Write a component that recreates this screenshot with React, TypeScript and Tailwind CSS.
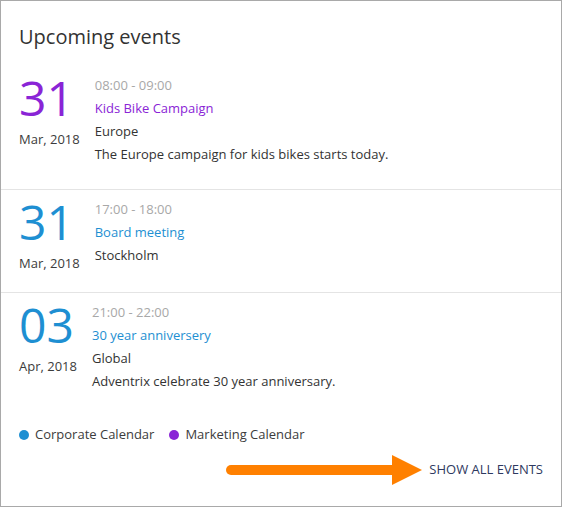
import { FC } from "react";

type EventItem = {
  day: string;
  month: string;
  time: string;
  title: string;
  location: string;
  description?: string;
  calendar: "corporate" | "marketing";
};

const events: EventItem[] = [
  {
    day: "31",
    month: "Mar, 2018",
    time: "08:00 - 09:00",
    title: "Kids Bike Campaign",
    location: "Europe",
    description: "The Europe campaign for kids bikes starts today.",
    calendar: "marketing",
  },
  {
    day: "31",
    month: "Mar, 2018",
    time: "17:00 - 18:00",
    title: "Board meeting",
    location: "Stockholm",
    calendar: "corporate",
  },
  {
    day: "03",
    month: "Apr, 2018",
    time: "21:00 - 22:00",
    title: "30 year anniversery",
    location: "Global",
    description: "Adventrix celebrate 30 year anniversary.",
    calendar: "corporate",
  },
];

const EventRow: FC<{ event: EventItem; last: boolean }> = ({ event, last }) => {
  const color = event.calendar === "marketing" ? "text-[#8a24d6]" : "text-[#1e8fd2]";
  return (
    <div className={`flex items-start gap-[15px] px-[18px] pt-[8px] ${last ? "" : "border-b border-[#e4e4e4]"}`}>
      <div className="flex flex-col pb-[17px]">
        <span className={`text-[48px] leading-none ${color}`}>{event.day}</span>
        <span className="mt-[6px] text-[13px] leading-[23px] text-[#3c3c3c]">{event.month}</span>
      </div>
      <div className="flex flex-col pb-[23px] text-[13px] leading-[23px]">
        <span className="text-[#a8a8a8]">{event.time}</span>
        <span className={color}>{event.title}</span>
        <span className="text-[#333]">{event.location}</span>
        {event.description && <span className="text-[#333]">{event.description}</span>}
      </div>
    </div>
  );
};

export default function App() {
  return (
    <div
      className="w-[562px] h-[507px] bg-white border border-[#a9a9a9] flex flex-col"
      style={{ fontFamily: '"Open Sans", "Liberation Sans", sans-serif' }}
    >
      <h2 className="px-[18px] pt-[22px] mb-[15px] text-[20px] leading-[28px] text-[#333]">Upcoming events</h2>

      {events.map((ev, i) => (
        <EventRow key={i} event={ev} last={i === events.length - 1} />
      ))}

      {/* legend */}
      <div className="flex items-center px-[18px] mt-[7px] text-[13px] leading-[23px] text-[#3c3c3c]">
        <span className="w-[10px] h-[10px] rounded-full bg-[#1e8fd2]" />
        <span className="ml-[6px]">Corporate Calendar</span>
        <span className="ml-[15px] w-[10px] h-[10px] rounded-full bg-[#8a24d6]" />
        <span className="ml-[6px]">Marketing Calendar</span>
      </div>

      <div className="flex items-center justify-end px-[18px] mt-[9px]">
        <svg width="196" height="30" viewBox="0 0 196 30">
          <line x1="5" y1="15" x2="168" y2="15" stroke="#ff8000" strokeWidth="10" strokeLinecap="round" />
          <polygon points="166,0 196,15 166,30" fill="#ff8000" />
        </svg>
        <span className="ml-[7px] text-[13px] font-medium text-[#2e3960] tracking-[0px]">SHOW ALL EVENTS</span>
      </div>
    </div>
  );
}
